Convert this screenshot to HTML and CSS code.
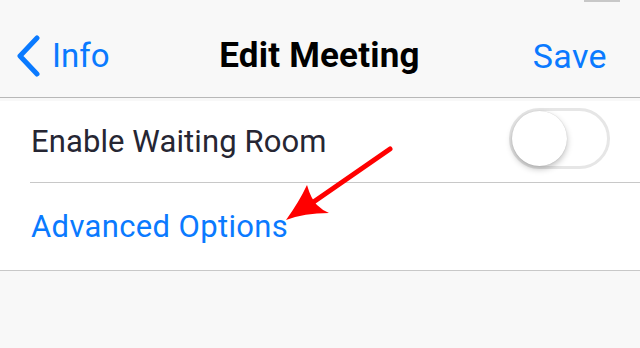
FILE: index.html
```html
<!DOCTYPE html>
<html>
<head>
<meta charset="utf-8">
<link rel="stylesheet" href="styles.css">
</head>
<body>
<div class="screen">
  <div class="status"><span class="status-bar"></span></div>
  <header class="nav">
    <div class="nav-left">
      <svg class="chev" width="26" height="42" viewBox="0 0 26 42"><path d="M21 3 L4 21 L21 39" fill="none" stroke="#0a7aff" stroke-width="5" stroke-linecap="round" stroke-linejoin="round"/></svg>
      <span class="nav-link">Info</span>
    </div>
    <div class="nav-title">Edit Meeting</div>
    <div class="nav-right"><span class="nav-link save">Save</span></div>
  </header>
  <section class="group">
    <div class="row row-toggle">
      <span class="label">Enable Waiting Room</span>
      <span class="toggle"><span class="knob"></span></span>
    </div>
    <div class="sep"></div>
    <div class="row row-link">
      <span class="link">Advanced Options</span>
    </div>
  </section>
  <svg class="arrow" width="640" height="348" viewBox="0 0 640 348">
    <line x1="390" y1="149" x2="312" y2="203" stroke="#f00" stroke-width="5" stroke-linecap="round"/>
    <path d="M286 220 Q299 202 307 185 Q311 199 317 205 Q322 210 329 213 Q304 213 286 220 Z" fill="#f00"/>
  </svg>
</div>
</body>
</html>
```
FILE: styles.css
```css
* { box-sizing: border-box; }
html, body { margin: 0; padding: 0; }
body {
  width: 640px;
  height: 348px;
  background: #f8f8f8;
  font-family: Roboto, "Liberation Sans", sans-serif;
  overflow: hidden;
}
.screen {
  position: relative;
  width: 640px;
  height: 348px;
}
.status {
  height: 0;
  display: flex;
  justify-content: flex-end;
  padding-right: 20px;
}
.status-bar {
  display: block;
  width: 36px;
  height: 2px;
  background: #c8c8c8;
}
.nav {
  height: 98px;
  background: #f8f8f8;
  border-bottom: 1px solid #b8b8b8;
  display: grid;
  grid-template-columns: 1fr auto 1fr;
  align-items: center;
  padding: 14px 33px 0 16px;
}
.nav-left {
  display: flex;
  align-items: center;
  gap: 10px;
}
.chev { display: block; margin-top: 0; }
.nav-link {
  color: #0a7aff;
  font-size: 33px;
}
.save {
  font-size: 34px;
  letter-spacing: 0.4px;
}
.nav-title {
  font-size: 35px;
  font-weight: 700;
  color: #000;
  letter-spacing: 0.2px;
  margin-left: 16px;
}
.nav-right {
  display: flex;
  justify-content: flex-end;
}
.group {
  margin-top: 3px;
  background: #fff;
  border-bottom: 1px solid #c8c8c8;
}
.row {
  display: flex;
  align-items: center;
  padding-left: 31px;
}
.row-toggle {
  height: 81px;
  justify-content: space-between;
  padding-right: 30px;
}
.row-link {
  height: 87px;
}
.sep {
  margin-left: 30px;
  height: 1px;
  background: #c8c8c8;
}
.label {
  font-size: 31px;
  color: #262633;
  margin-top: -1px;
  letter-spacing: 0.1px;
}
.link {
  font-size: 31px;
  color: #0a7aff;
  margin-bottom: 0;
  letter-spacing: 0.35px;
}
.toggle {
  position: relative;
  display: block;
  width: 101px;
  height: 61px;
  border-radius: 31px;
  border: 3px solid #e6e6e6;
  background: #fff;
  margin-top: -7px;
}
.knob {
  position: absolute;
  left: 0;
  top: 0;
  width: 55px;
  height: 55px;
  border-radius: 50%;
  background: #fff;
  box-shadow: 0 3px 6px rgba(0,0,0,0.25), 0 0 1px rgba(0,0,0,0.2);
}
.arrow {
  position: absolute;
  left: 0;
  top: 0;
  pointer-events: none;
}
```
